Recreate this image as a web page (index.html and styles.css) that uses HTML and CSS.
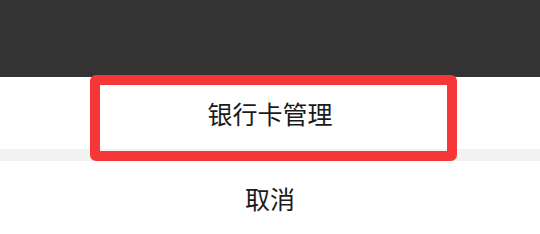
FILE: index.html
```html
<!DOCTYPE html>
<html lang="zh-CN">
<head>
    <meta charset="UTF-8" />
    <meta name="viewport" content="width=device-width, initial-scale=1.0" />
    <title>银行卡管理</title>
    <link rel="stylesheet" href="styles.css">
</head>
<body>

<div class="mask"></div>

<!-- action sheet -->
<div class="sheet">
    <div class="sheet-item">银行卡管理</div>
    <div class="sheet-gap"></div>
    <div class="sheet-item cancel">取消</div>

    <!-- highlight frame over the first option -->
    <div class="highlight"></div>
</div>

</body>
</html>
```

FILE: styles.css
```css
body {
    margin: 0;
    font-family: "Noto Sans CJK SC", "Noto Sans", sans-serif;
    background-color: #fff;
    color: #1a1a1a;
}
.mask {
    height: 77px;
    background-color: #333;
}
.sheet {
    position: relative;
    background-color: #fff;
}
.sheet-item {
    height: 72px;
    display: flex;
    align-items: center;
    justify-content: center;
    font-size: 25px;
}
.sheet-item.cancel {
    height: 73px;
}
.sheet-gap {
    height: 12px;
    background-color: #f2f2f2;
}
.highlight {
    position: absolute;
    left: 90px;
    top: -2px;
    width: 347px;
    height: 66px;
    border: 10px solid #f73737;
    border-radius: 6px;
}
```
